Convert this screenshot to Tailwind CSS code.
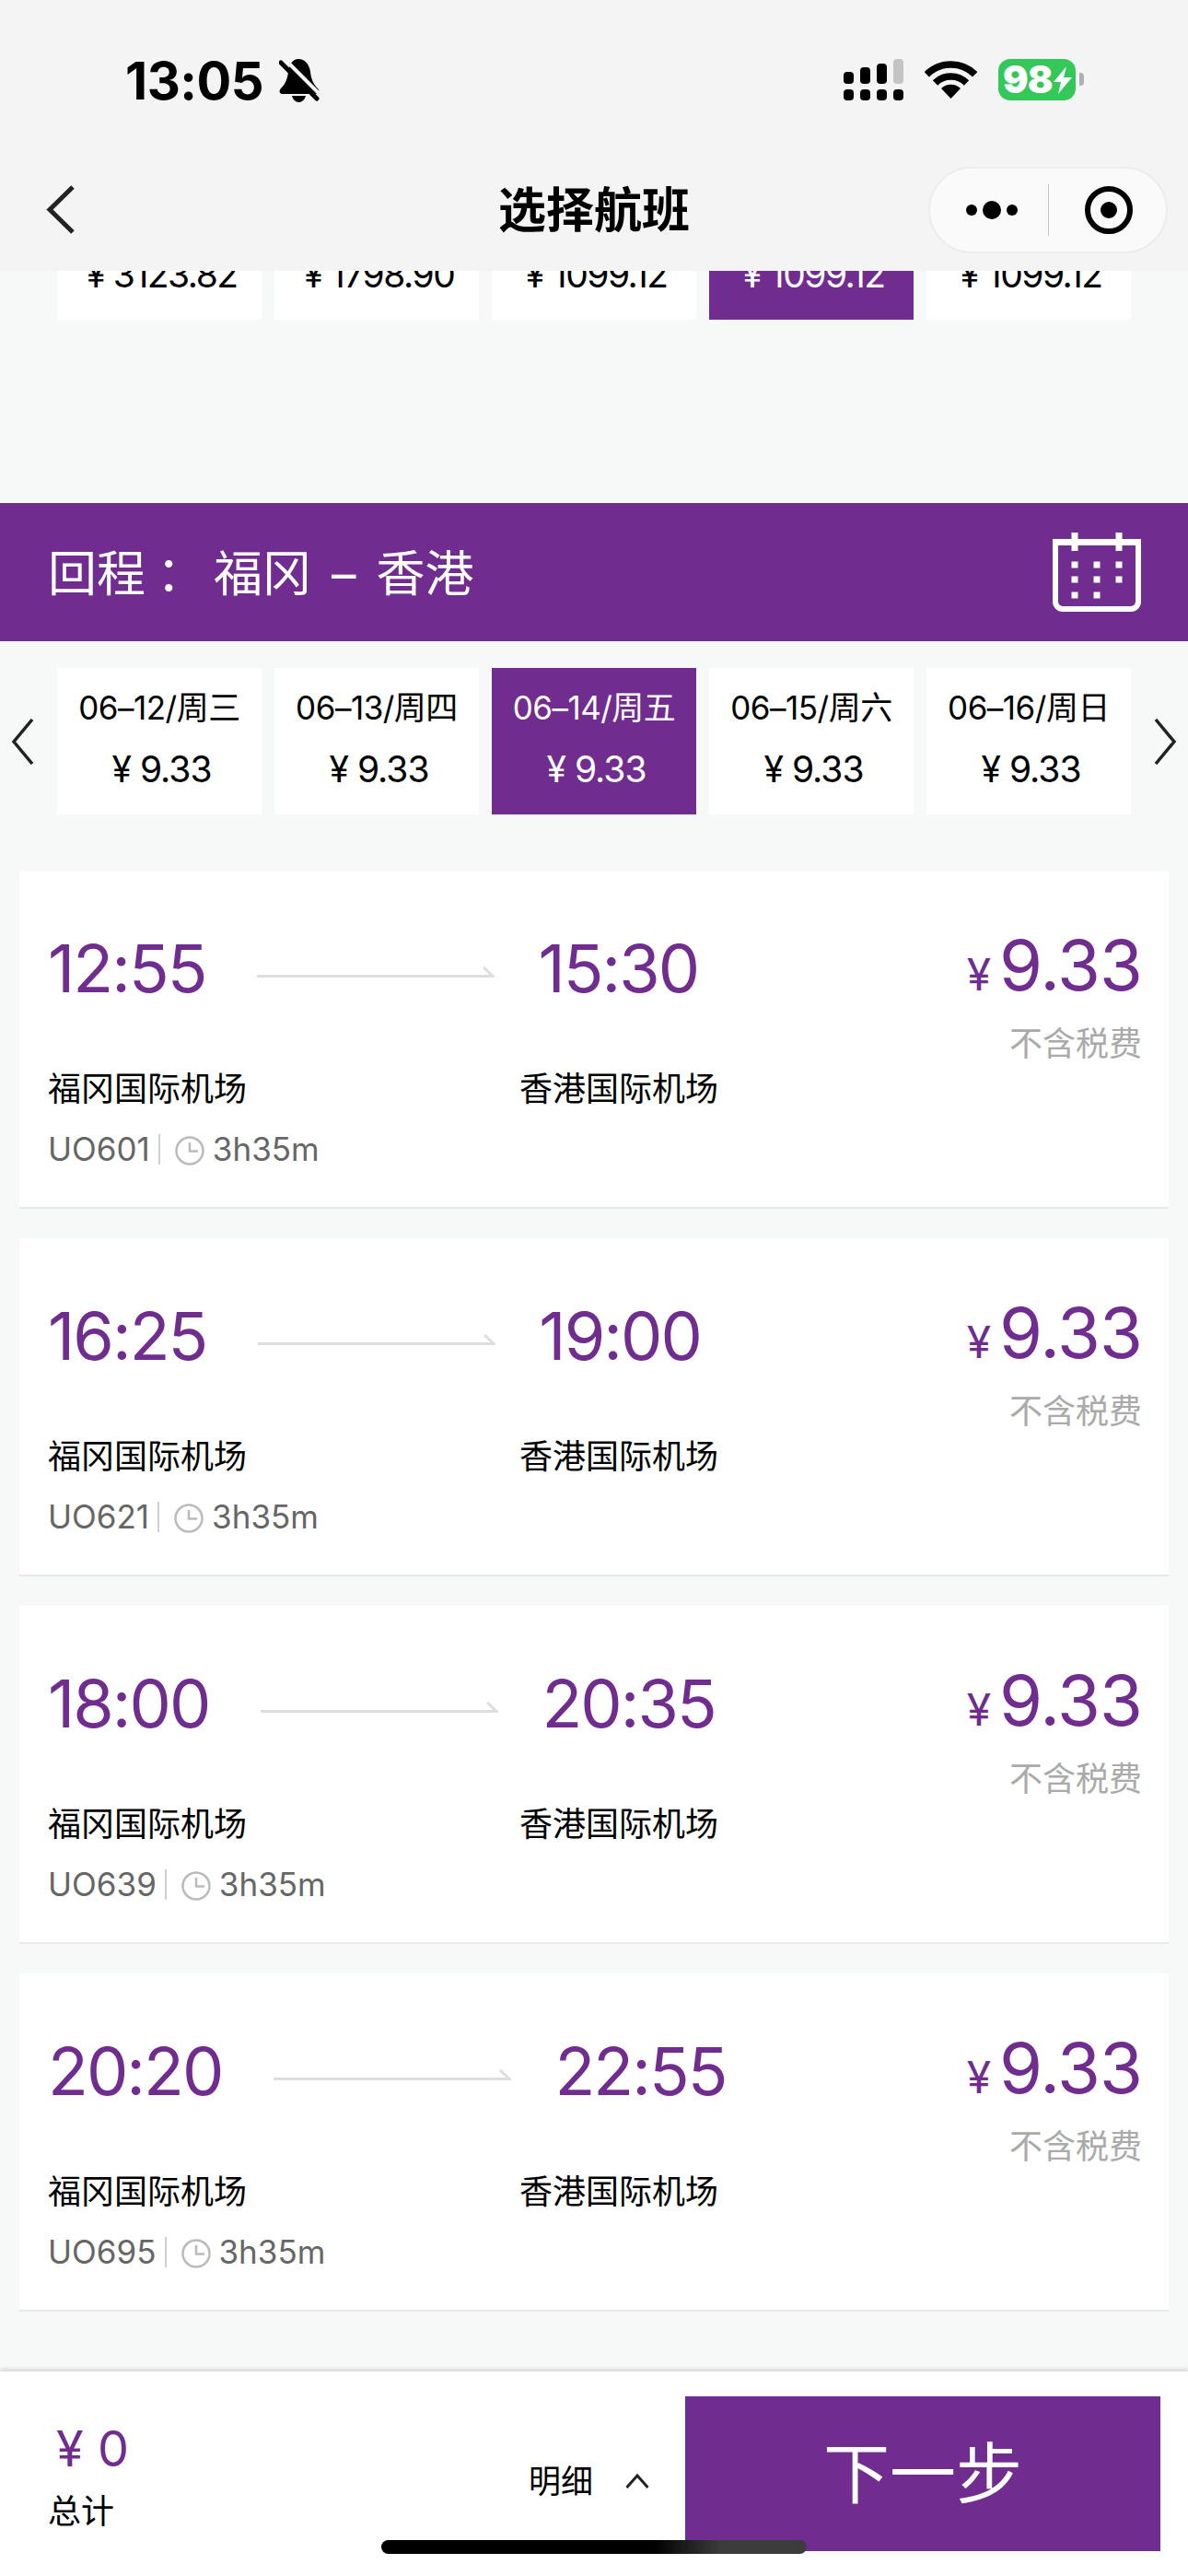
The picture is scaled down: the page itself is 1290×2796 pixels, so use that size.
<!DOCTYPE html>
<html lang="zh-CN">

<head>
  <meta charset="UTF-8">
  <meta name="viewport" content="width=device-width, initial-scale=1.0">
  <title>选择航班</title>
  <script src="https://cdn.jsdelivr.net/npm/@tailwindcss/browser@4"></script>
</head>

<body class="bg-[#f7f9f8] text-black font-['Inter','Noto_Sans_CJK_SC',sans-serif]">
  <div class="relative w-[1290px] h-[2796px] overflow-hidden flex flex-col">

    <!-- Status bar + title bar -->
    <header class="h-[294px] shrink-0 bg-[#f4f4f4] relative z-10">
      <div class="h-[174px] flex justify-between">
        <div class="flex items-start pt-[57px] pl-[136px] gap-[17px]">
          <span class="text-[56px] leading-[62px] font-bold tracking-[-0.5px]">13:05</span>
          <svg class="mt-[6px]" width="46" height="48" viewBox="0 0 46 48">
            <path d="M21 1c7 0 12 6 13 14 1 9 4 14 8 18 2 2 2 5-1 6H3c-3-1-3-4-1-6 4-4 7-9 8-18 1-8 5-14 11-14z" fill="#000" />
            <path d="M14 41h15c-1 4-4 7-7.500 7s-6.500-3-7.500-7z" fill="#000" />
            <path d="M5 0l41 41" stroke="#f4f4f4" stroke-width="4" />
            <path d="M2 5l39 39" stroke="#000" stroke-width="5" stroke-linecap="round" />
          </svg>
        </div>
        <div class="flex items-start pt-[64px] pr-[113px]">
          <div class="grid grid-cols-4 gap-x-[7px] gap-y-[6px] w-[65px]">
            <div class="h-[27px] flex items-end"><div class="w-full h-[13px] rounded-[4px] bg-black"></div></div>
            <div class="h-[27px] flex items-end"><div class="w-full h-[18px] rounded-[4px] bg-black"></div></div>
            <div class="h-[27px] flex items-end"><div class="w-full h-[22px] rounded-[4px] bg-black"></div></div>
            <div class="h-[27px] flex items-end"><div class="w-full h-[27px] rounded-[4px] bg-[#c4c4c4]"></div></div>
            <div class="h-[12px] rounded-[4px] bg-black"></div>
            <div class="h-[12px] rounded-[4px] bg-black"></div>
            <div class="h-[12px] rounded-[4px] bg-black"></div>
            <div class="h-[12px] rounded-[4px] bg-black"></div>
          </div>
          <svg class="ml-[23px] mt-[1px]" width="57" height="42" viewBox="0 0 57 42">
            <path d="M2.300 15.800A37 37 0 0 1 54.700 15.800" fill="none" stroke="#000" stroke-width="7.500" />
            <path d="M11.500 25A24 24 0 0 1 45.500 25" fill="none" stroke="#000" stroke-width="7.500" />
            <path d="M28.500 42L18 31A15 15 0 0 1 39 31Z" fill="#000" />
          </svg>
          <div class="ml-[23px] w-[84px] h-[45px] rounded-[13px] bg-[#34c759] flex items-center pl-[5px] text-white text-[41px] leading-none font-black tracking-[-1px]">
            98<svg class="ml-[1px]" width="20" height="30" viewBox="0 0 20 30"><path d="M14 0L0 17h8L5 30 20 12h-9z" fill="#fff" /></svg>
          </div>
          <div class="ml-[4px] mt-[15px] w-[5px] h-[14px] rounded-r-[4px] bg-[#b0b0b0]"></div>
        </div>
      </div>
      <div class="h-[120px] relative flex items-start justify-center">
        <svg class="absolute left-[49px] top-[26px]" width="34" height="55" viewBox="0 0 34 55">
          <path d="M30 3L5 27.500 30 52" fill="none" stroke="#222" stroke-width="5" />
        </svg>
        <h1 class="mt-[24px] text-[52px] leading-[62px] font-semibold">选择航班</h1>
        <div class="absolute left-[1008px] top-[7px] w-[260px] h-[94px] rounded-[47px] bg-[#fafafa] border-2 border-[#ececec] flex items-center">
          <svg class="ml-[39px] shrink-0" width="56" height="20" viewBox="0 0 56 20">
            <circle cx="6" cy="10" r="6" />
            <circle cx="28" cy="10" r="10" />
            <circle cx="50" cy="10" r="6" />
          </svg>
          <div class="ml-[33px] w-[1px] h-[56px] bg-[#c8c8c8] shrink-0"></div>
          <svg class="ml-[39px] shrink-0" width="52" height="52" viewBox="0 0 52 52">
            <circle cx="26" cy="26" r="23" fill="none" stroke="#000" stroke-width="6" />
            <circle cx="26" cy="26" r="9" />
          </svg>
        </div>
      </div>
    </header>

    <!-- Outbound date strip, scrolled under the header -->
    <div class="h-[53px] shrink-0 overflow-hidden flex items-end gap-[14px] pl-[62px]">
      <div class="w-[222px] h-[159px] shrink-0 bg-white flex items-end justify-center pl-[5px] pb-[27px] text-[39px] leading-[44px] tracking-[-1.5px]">¥ 3123.82</div>
      <div class="w-[222px] h-[159px] shrink-0 bg-white flex items-end justify-center pl-[5px] pb-[27px] text-[39px] leading-[44px] tracking-[-1.5px]">¥ 1798.90</div>
      <div class="w-[222px] h-[159px] shrink-0 bg-white flex items-end justify-center pl-[5px] pb-[27px] text-[39px] leading-[44px] tracking-[-1.5px]">¥ 1099.12</div>
      <div class="w-[222px] h-[159px] shrink-0 bg-[#702c8f] text-white flex items-end justify-center pl-[5px] pb-[27px] text-[39px] leading-[44px] tracking-[-1.5px]">¥ 1099.12</div>
      <div class="w-[222px] h-[159px] shrink-0 bg-white flex items-end justify-center pl-[5px] pb-[27px] text-[39px] leading-[44px] tracking-[-1.5px]">¥ 1099.12</div>
    </div>

    <!-- Return section title -->
    <div class="mt-[199px] h-[150px] shrink-0 bg-[#702c8f] text-white flex items-center justify-between pl-[52px] pr-[51px]">
      <div class="pt-[3px] text-[53px] leading-[60px] flex items-center">
        <span>回程</span><span class="ml-[12px] mr-[9px]">：</span><span>福冈</span><span class="mx-[22px]">–</span><span>香港</span>
      </div>
      <svg width="96" height="87" viewBox="0 0 96 87" fill="none">
        <path d="M3 10v65a8 8 0 0 0 8 8h74a8 8 0 0 0 8-8V10" stroke="#fff" stroke-width="6" />
        <rect x="0" y="7" width="96" height="7" fill="#fff" />
        <rect x="20.500" y="0" width="7" height="20" fill="#fff" />
        <rect x="68.500" y="0" width="7" height="20" fill="#fff" />
        <rect x="20.500" y="31.500" width="7" height="7" fill="#fff" /><rect x="44.500" y="31.500" width="7" height="7" fill="#fff" /><rect x="68.500" y="31.500" width="7" height="7" fill="#fff" />
        <rect x="20.500" y="47.500" width="7" height="7" fill="#fff" /><rect x="44.500" y="47.500" width="7" height="7" fill="#fff" /><rect x="68.500" y="47.500" width="7" height="7" fill="#fff" />
        <rect x="20.500" y="64.500" width="7" height="7" fill="#fff" /><rect x="44.500" y="64.500" width="7" height="7" fill="#fff" />
      </svg>
    </div>

    <!-- Return date strip -->
    <div class="mt-[29px] h-[159px] shrink-0 flex items-center justify-between px-[12px]">
      <svg width="26" height="50" viewBox="0 0 26 50"><path d="M23 1L3 25l20 24" fill="none" stroke="#222" stroke-width="3.500" /></svg>
      <div class="flex gap-[14px]">
        <div class="w-[222px] h-[159px] bg-white flex flex-col items-center pt-[20px] gap-[22px]"><span class="text-[35px] leading-[46px] tracking-[-0.5px] whitespace-nowrap">06–12/周三</span><span class="pl-[5px] text-[39px] leading-[44px] tracking-[-1px]">¥ 9.33</span></div>
        <div class="w-[222px] h-[159px] bg-white flex flex-col items-center pt-[20px] gap-[22px]"><span class="text-[35px] leading-[46px] tracking-[-0.5px] whitespace-nowrap">06–13/周四</span><span class="pl-[5px] text-[39px] leading-[44px] tracking-[-1px]">¥ 9.33</span></div>
        <div class="w-[222px] h-[159px] bg-[#702c8f] text-white flex flex-col items-center pt-[20px] gap-[22px]"><span class="text-[35px] leading-[46px] tracking-[-0.5px] whitespace-nowrap">06–14/周五</span><span class="pl-[5px] text-[39px] leading-[44px] tracking-[-1px]">¥ 9.33</span></div>
        <div class="w-[222px] h-[159px] bg-white flex flex-col items-center pt-[20px] gap-[22px]"><span class="text-[35px] leading-[46px] tracking-[-0.5px] whitespace-nowrap">06–15/周六</span><span class="pl-[5px] text-[39px] leading-[44px] tracking-[-1px]">¥ 9.33</span></div>
        <div class="w-[222px] h-[159px] bg-white flex flex-col items-center pt-[20px] gap-[22px]"><span class="text-[35px] leading-[46px] tracking-[-0.5px] whitespace-nowrap">06–16/周日</span><span class="pl-[5px] text-[39px] leading-[44px] tracking-[-1px]">¥ 9.33</span></div>
      </div>
      <svg width="26" height="50" viewBox="0 0 26 50"><path d="M3 1l20 24L3 49" fill="none" stroke="#222" stroke-width="3.500" /></svg>
    </div>

    <!-- Flights -->
    <div class="mt-[61px] px-[21px] flex flex-col gap-[32px]">

      <div class="h-[367px] bg-white border-b-2 border-[#e8e8e8] flex justify-between pl-[31px] pr-[29px]">
        <div class="w-[800px]">
          <div class="mt-[66px] h-[80px] flex items-center">
            <span class="text-[72px] leading-[80px] text-[#702c8f] tracking-[-2px]">12:55</span>
            <svg class="ml-[56px] mt-[8px] shrink-0" width="258" height="12" viewBox="0 0 258 12" fill="none"><path d="M0 10.500h256L246 1" stroke="#dedede" stroke-width="3" /></svg>
            <span class="ml-[47px] text-[72px] leading-[80px] text-[#702c8f] tracking-[-2px]">15:30</span>
          </div>
          <div class="mt-[66px] h-[50px] grid grid-cols-[512px_1fr] items-center text-[36px] leading-[50px] whitespace-nowrap">
            <span>福冈国际机场</span><span>香港国际机场</span>
          </div>
          <div class="mt-[20px] h-[40px] flex items-center text-[35px] leading-[40px] text-[#666]">
            <span>UO601</span>
            <div class="ml-[9px] w-[2px] h-[33px] bg-[#d0d0d0]"></div>
            <svg class="ml-[16px] mr-[9px] mt-[3px]" width="32" height="32" viewBox="0 0 32 32" fill="none"><circle cx="16" cy="16" r="14.500" stroke="#bbb" stroke-width="2.500" /><path d="M16 7v9.500h9" stroke="#bbb" stroke-width="2.500" /></svg>
            <span>3h35m</span>
          </div>
        </div>
        <div class="flex flex-col items-end">
          <div class="mt-[62px] h-[80px] flex items-baseline text-[#702c8f]"><span class="text-[48px] mr-[9px]">¥</span><span class="text-[76px] leading-[80px] tracking-[-1px]">9.33</span></div>
          <div class="mt-[26px] h-[40px] text-[36px] leading-[40px] text-[#aaa]">不含税费</div>
        </div>
      </div>

      <div class="h-[367px] bg-white border-b-2 border-[#e8e8e8] flex justify-between pl-[31px] pr-[29px]">
        <div class="w-[800px]">
          <div class="mt-[66px] h-[80px] flex items-center">
            <span class="text-[72px] leading-[80px] text-[#702c8f] tracking-[-2px]">16:25</span>
            <svg class="ml-[56px] mt-[8px] shrink-0" width="258" height="12" viewBox="0 0 258 12" fill="none"><path d="M0 10.500h256L246 1" stroke="#dedede" stroke-width="3" /></svg>
            <span class="ml-[47px] text-[72px] leading-[80px] text-[#702c8f] tracking-[-2px]">19:00</span>
          </div>
          <div class="mt-[66px] h-[50px] grid grid-cols-[512px_1fr] items-center text-[36px] leading-[50px] whitespace-nowrap">
            <span>福冈国际机场</span><span>香港国际机场</span>
          </div>
          <div class="mt-[20px] h-[40px] flex items-center text-[35px] leading-[40px] text-[#666]">
            <span>UO621</span>
            <div class="ml-[9px] w-[2px] h-[33px] bg-[#d0d0d0]"></div>
            <svg class="ml-[16px] mr-[9px] mt-[3px]" width="32" height="32" viewBox="0 0 32 32" fill="none"><circle cx="16" cy="16" r="14.500" stroke="#bbb" stroke-width="2.500" /><path d="M16 7v9.500h9" stroke="#bbb" stroke-width="2.500" /></svg>
            <span>3h35m</span>
          </div>
        </div>
        <div class="flex flex-col items-end">
          <div class="mt-[62px] h-[80px] flex items-baseline text-[#702c8f]"><span class="text-[48px] mr-[9px]">¥</span><span class="text-[76px] leading-[80px] tracking-[-1px]">9.33</span></div>
          <div class="mt-[26px] h-[40px] text-[36px] leading-[40px] text-[#aaa]">不含税费</div>
        </div>
      </div>

      <div class="h-[367px] bg-white border-b-2 border-[#e8e8e8] flex justify-between pl-[31px] pr-[29px]">
        <div class="w-[800px]">
          <div class="mt-[66px] h-[80px] flex items-center">
            <span class="text-[72px] leading-[80px] text-[#702c8f] tracking-[-2px]">18:00</span>
            <svg class="ml-[56px] mt-[8px] shrink-0" width="258" height="12" viewBox="0 0 258 12" fill="none"><path d="M0 10.500h256L246 1" stroke="#dedede" stroke-width="3" /></svg>
            <span class="ml-[47px] text-[72px] leading-[80px] text-[#702c8f] tracking-[-2px]">20:35</span>
          </div>
          <div class="mt-[66px] h-[50px] grid grid-cols-[512px_1fr] items-center text-[36px] leading-[50px] whitespace-nowrap">
            <span>福冈国际机场</span><span>香港国际机场</span>
          </div>
          <div class="mt-[20px] h-[40px] flex items-center text-[35px] leading-[40px] text-[#666]">
            <span>UO639</span>
            <div class="ml-[9px] w-[2px] h-[33px] bg-[#d0d0d0]"></div>
            <svg class="ml-[16px] mr-[9px] mt-[3px]" width="32" height="32" viewBox="0 0 32 32" fill="none"><circle cx="16" cy="16" r="14.500" stroke="#bbb" stroke-width="2.500" /><path d="M16 7v9.500h9" stroke="#bbb" stroke-width="2.500" /></svg>
            <span>3h35m</span>
          </div>
        </div>
        <div class="flex flex-col items-end">
          <div class="mt-[62px] h-[80px] flex items-baseline text-[#702c8f]"><span class="text-[48px] mr-[9px]">¥</span><span class="text-[76px] leading-[80px] tracking-[-1px]">9.33</span></div>
          <div class="mt-[26px] h-[40px] text-[36px] leading-[40px] text-[#aaa]">不含税费</div>
        </div>
      </div>

      <div class="h-[367px] bg-white border-b-2 border-[#e8e8e8] flex justify-between pl-[31px] pr-[29px]">
        <div class="w-[800px]">
          <div class="mt-[66px] h-[80px] flex items-center">
            <span class="text-[72px] leading-[80px] text-[#702c8f] tracking-[-2px]">20:20</span>
            <svg class="ml-[56px] mt-[8px] shrink-0" width="258" height="12" viewBox="0 0 258 12" fill="none"><path d="M0 10.500h256L246 1" stroke="#dedede" stroke-width="3" /></svg>
            <span class="ml-[47px] text-[72px] leading-[80px] text-[#702c8f] tracking-[-2px]">22:55</span>
          </div>
          <div class="mt-[66px] h-[50px] grid grid-cols-[512px_1fr] items-center text-[36px] leading-[50px] whitespace-nowrap">
            <span>福冈国际机场</span><span>香港国际机场</span>
          </div>
          <div class="mt-[20px] h-[40px] flex items-center text-[35px] leading-[40px] text-[#666]">
            <span>UO695</span>
            <div class="ml-[9px] w-[2px] h-[33px] bg-[#d0d0d0]"></div>
            <svg class="ml-[16px] mr-[9px] mt-[3px]" width="32" height="32" viewBox="0 0 32 32" fill="none"><circle cx="16" cy="16" r="14.500" stroke="#bbb" stroke-width="2.500" /><path d="M16 7v9.500h9" stroke="#bbb" stroke-width="2.500" /></svg>
            <span>3h35m</span>
          </div>
        </div>
        <div class="flex flex-col items-end">
          <div class="mt-[62px] h-[80px] flex items-baseline text-[#702c8f]"><span class="text-[48px] mr-[9px]">¥</span><span class="text-[76px] leading-[80px] tracking-[-1px]">9.33</span></div>
          <div class="mt-[26px] h-[40px] text-[36px] leading-[40px] text-[#aaa]">不含税费</div>
        </div>
      </div>
    </div>

    <!-- Bottom bar -->
    <footer class="absolute left-0 right-0 bottom-0 h-[222px] bg-white shadow-[0_-3px_4px_rgba(0,0,0,0.12)] flex">
      <div class="pl-[52px] pt-[54px] w-[574px] shrink-0">
        <div class="text-[54px] leading-[60px] text-[#702c8f] pl-[9px]">¥ 0</div>
        <div class="mt-[15px] text-[36px] leading-[46px]">总计</div>
      </div>
      <div class="w-[170px] shrink-0 pt-[94px] flex items-start">
        <span class="text-[35px] leading-[50px]">明细</span>
        <svg class="ml-[35px] mt-[17px]" width="26" height="16" viewBox="0 0 26 16" fill="none"><path d="M1.500 15L13 2l11.500 13" stroke="#222" stroke-width="3" /></svg>
      </div>
      <button class="mt-[27px] w-[516px] h-[168px] bg-[#702c8f] text-white text-[72px]">下一步</button>
    </footer>

    <!-- Home indicator -->
    <div class="absolute z-20 left-[414px] top-[2757px] w-[462px] h-[15px] rounded-[8px] bg-[linear-gradient(to_right,#000_64%,#3c3c3c_80%)]"></div>
  </div>
</body>

</html>
